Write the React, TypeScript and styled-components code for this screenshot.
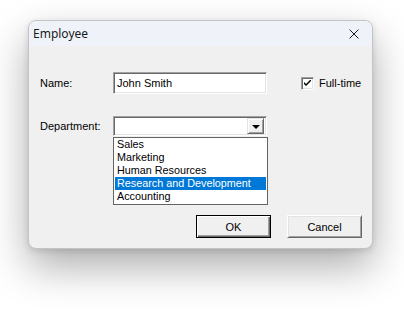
import React from "react";
import styled, { createGlobalStyle } from "styled-components";

const GlobalStyle = createGlobalStyle`
  html, body {
    margin: 0;
    padding: 0;
    background: #ffffff;
  }
  body {
    font-family: "Liberation Sans", Arial, sans-serif;
    font-size: 11px;
    color: #000;
  }
`;

const Page = styled.div`
  width: 404px;
  height: 320px;
  padding: 20px 0 0 28px;
  box-sizing: border-box;
  overflow: hidden;
`;

const Window = styled.div`
  width: 345px;
  height: 229px;
  display: flex;
  flex-direction: column;
  border-radius: 8px;
  border: 1px solid #c4c4c4;
  box-sizing: border-box;
  overflow: hidden;
  background: #f0f0f0;
  box-shadow: 0 18px 42px rgba(0, 0, 0, 0.32), 0 2px 6px rgba(0, 0, 0, 0.12);
`;

const TitleBar = styled.div`
  height: 25px;
  flex: none;
  display: flex;
  align-items: center;
  justify-content: space-between;
  padding: 0 13px 0 4px;
  background: #eff3f9;
`;

const Title = styled.span`
  font-family: "Noto Sans", "Open Sans", sans-serif;
  font-size: 12px;
  color: #1a1a1a;
`;

const CloseIcon = styled.svg`
  width: 10px;
  height: 10px;
  display: block;
`;

const Body = styled.div`
  flex: 1;
  display: flex;
  flex-direction: column;
  padding: 26px 10px 10px 11px;
`;

const Row = styled.div<{ $gap?: number }>`
  display: flex;
  align-items: center;
  white-space: nowrap;
  margin-top: ${(p) => p.$gap ?? 0}px;
`;

const Label = styled.span`
  width: 73px;
  flex: none;
`;

const TextBox = styled.div`
  width: 154px;
  height: 22px;
  flex: none;
  box-sizing: border-box;
  background: #fff;
  border: 1px solid;
  border-color: #a0a0a0 #ffffff #ffffff #a0a0a0;
  box-shadow: inset 1px 1px #696969, inset -1px -1px #e3e3e3;
  display: flex;
  align-items: center;
  padding-left: 3px;
  font-size: 11px;
`;

const ComboWrap = styled.div`
  position: relative;
`;

const Combo = styled.div`
  width: 154px;
  height: 20px;
  box-sizing: border-box;
  background: #fff;
  border: 1px solid;
  border-color: #a0a0a0 #ffffff #ffffff #a0a0a0;
  box-shadow: inset 1px 1px #696969, inset -1px -1px #e3e3e3;
  display: flex;
  justify-content: flex-end;
  align-items: center;
  padding: 2px;
`;

const DropButton = styled.div`
  width: 17px;
  height: 16px;
  box-sizing: border-box;
  background: #f0f0f0;
  border: 1px solid;
  border-color: #e3e3e3 #696969 #696969 #e3e3e3;
  box-shadow: inset 1px 1px #ffffff, inset -1px -1px #a0a0a0;
  display: flex;
  align-items: center;
  justify-content: center;
`;

const Arrow = styled.div`
  width: 0;
  height: 0;
  border-left: 4px solid transparent;
  border-right: 4px solid transparent;
  border-top: 4px solid #000;
  margin-top: 1px;
`;

const ListBox = styled.div`
  position: absolute;
  left: 0;
  top: 21px;
  width: 155px;
  box-sizing: border-box;
  background: #fff;
  border: 1px solid #646464;
  padding: 0 0 1px 1px;
  z-index: 2;
`;

const ListItem = styled.div<{ $selected?: boolean }>`
  height: 13px;
  line-height: 13px;
  padding-left: 2px;
  margin-right: 1px;
  font-size: 10.8px;
  white-space: nowrap;
  background: ${(p) => (p.$selected ? "#0078d7" : "transparent")};
  color: ${(p) => (p.$selected ? "#fff" : "#000")};
`;

const CheckLabel = styled.label`
  display: flex;
  align-items: center;
  gap: 5px;
  margin-left: 34px;
  flex: none;
`;

const CheckBox = styled.div`
  width: 13px;
  height: 13px;
  box-sizing: border-box;
  background: #fff;
  border: 1px solid;
  border-color: #a0a0a0 #ffffff #ffffff #a0a0a0;
  box-shadow: inset 1px 1px #696969, inset -1px -1px #e3e3e3;
  display: flex;
  align-items: center;
  justify-content: center;
`;

const Buttons = styled.div`
  margin-top: auto;
  display: flex;
  justify-content: flex-end;
  gap: 16px;
`;

const Button = styled.div<{ $default?: boolean }>`
  width: 75px;
  height: 23px;
  box-sizing: border-box;
  display: flex;
  align-items: center;
  justify-content: center;
  background: #f0f0f0;
  border: 1px solid;
  border-color: ${(p) =>
    p.$default ? "#000 #000 #000 #000" : "#ffffff #696969 #696969 #ffffff"};
  box-shadow: ${(p) =>
    p.$default
      ? "inset 1px 1px #ffffff, inset -1px -1px #696969, inset -2px -2px #a0a0a0"
      : "inset 1px 1px #e3e3e3, inset -1px -1px #a0a0a0"};
  font-size: 11px;
`;

const departments = [
  "Sales",
  "Marketing",
  "Human Resources",
  "Research and Development",
  "Accounting",
];

export default function App() {
  return (
    <>
      <GlobalStyle />
      <Page>
        <Window>
          <TitleBar>
            <Title>Employee</Title>
            <CloseIcon viewBox="0 0 10 10">
              <path d="M0.5 0.5 L9.5 9.5 M9.5 0.5 L0.5 9.5" stroke="#1a1a1a" strokeWidth="1" />
            </CloseIcon>
          </TitleBar>
          <Body>
            <Row>
              <Label>Name:</Label>
              <TextBox>John Smith</TextBox>
              <CheckLabel>
                <CheckBox>
                  <svg width="7" height="7" viewBox="0 0 7 7">
                    <path d="M0 2 L0 4 L2 6 L7 1 L7 -1 L2 4 Z" fill="#000" />
                  </svg>
                </CheckBox>
                Full-time
              </CheckLabel>
            </Row>
            <Row $gap={22}>
              <Label>Department:</Label>
              <ComboWrap>
                <Combo>
                  <DropButton>
                    <Arrow />
                  </DropButton>
                </Combo>
                <ListBox>
                  {departments.map((d) => (
                    <ListItem key={d} $selected={d === "Research and Development"}>
                      {d}
                    </ListItem>
                  ))}
                </ListBox>
              </ComboWrap>
            </Row>
            <Buttons>
              <Button $default>OK</Button>
              <Button>Cancel</Button>
            </Buttons>
          </Body>
        </Window>
      </Page>
    </>
  );
}
